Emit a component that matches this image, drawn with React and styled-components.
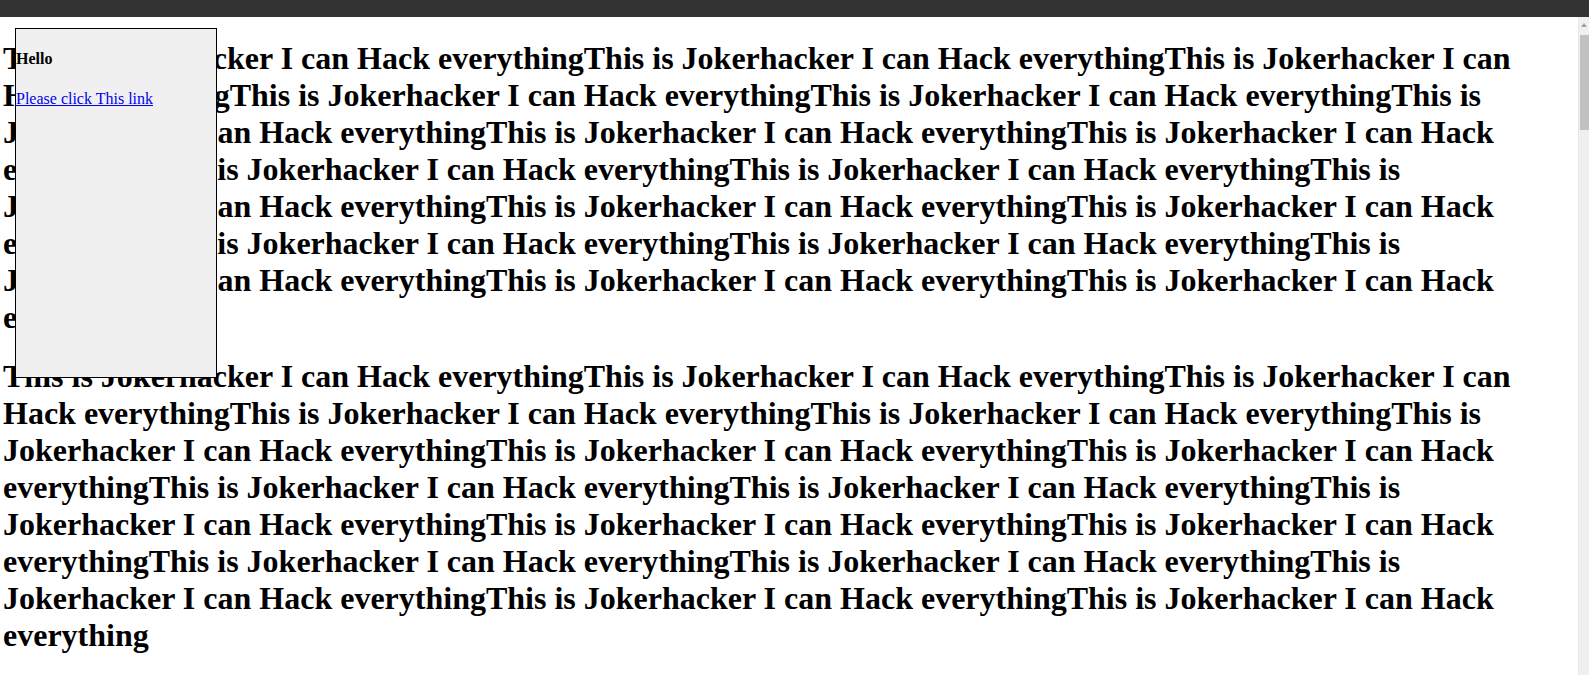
import React from "react";
import styled, { createGlobalStyle } from "styled-components";

const GlobalStyle = createGlobalStyle`
  html, body {
    margin: 0;
    padding: 0;
    background: #ffffff;
    overflow: hidden;
  }
`;

const Screen = styled.div`
  display: flex;
  flex-direction: column;
  width: 1589px;
  height: 675px;
  overflow: hidden;
  font-family: "Liberation Serif", "Times New Roman", serif;
`;

const TopBar = styled.div`
  flex: 0 0 17px;
  background: #333333;
`;

const Viewport = styled.div`
  flex: 1;
  display: flex;
  min-height: 0;
`;

const Page = styled.div`
  position: relative;
  flex: 1;
  min-width: 0;
  padding: 2px 0 0 3px;
  overflow: hidden;
  background: #ffffff;
  color: #000000;
`;

const Heading = styled.h1`
  font-size: 32px;
  font-weight: bold;
  line-height: normal;
  margin: 21.44px 0;
`;

const Frame = styled.div`
  position: absolute;
  top: 11px;
  left: 15px;
  width: 200px;
  height: 348px;
  background: #f0f0f0;
  border: 1px solid #000000;
  overflow: hidden;
  display: flow-root;
`;

const FrameTitle = styled.h4`
  font-size: 16px;
  font-weight: bold;
  line-height: normal;
  margin: 21.28px 0;
`;

const FrameLink = styled.a`
  font-size: 16px;
  color: #0000ee;
  text-decoration: underline;
  cursor: pointer;
`;

const Scrollbar = styled.div`
  flex: 0 0 11px;
  display: flex;
  flex-direction: column;
  align-items: center;
  background: #f0f0f0;
  border-left: 1px solid #e8e8e8;
  box-sizing: border-box;
  padding-top: 6px;
`;

const ArrowUp = styled.div`
  width: 0;
  height: 0;
  border-left: 3.5px solid transparent;
  border-right: 3.5px solid transparent;
  border-bottom: 4px solid #a3a3a3;
`;

const Thumb = styled.div`
  margin-top: 8px;
  width: 9px;
  height: 95px;
  background: #c1c1c1;
`;

const phrase = "This is Jokerhacker I can Hack everything";
const longText = Array.from({ length: 18 }, () => phrase).join("");

export default function App() {
  return (
    <>
      <GlobalStyle />
      <Screen>
        <TopBar />
        <Viewport>
          <Page>
            <Heading>{longText}</Heading>
            <Heading>{longText}</Heading>
            <Frame>
              <FrameTitle>Hello</FrameTitle>
              <FrameLink href="#">Please click This link</FrameLink>
            </Frame>
          </Page>
          <Scrollbar>
            <ArrowUp />
            <Thumb />
          </Scrollbar>
        </Viewport>
      </Screen>
    </>
  );
}
